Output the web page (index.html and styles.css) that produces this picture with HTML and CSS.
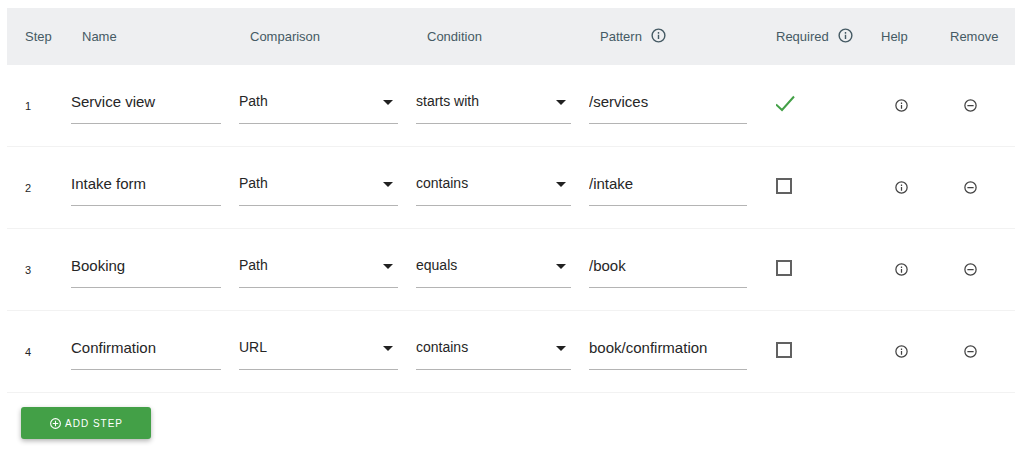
FILE: index.html
```html
<!DOCTYPE html>
<html lang="en">
<head>
    <meta charset="UTF-8">
    <meta name="viewport" content="width=device-width, initial-scale=1.0">
    <title>Goal Funnel Steps</title>
    <link rel="stylesheet" href="styles.css">
</head>
<body>
    <!-- Shared icons -->
    <svg class="sprite" aria-hidden="true">
        <symbol id="icon-info" viewBox="0 0 24 24">
            <path d="M11 7h2v2.4h-2zM11 11h2v6h-2zM12 2a10 10 0 1 0 0 20 10 10 0 0 0 0-20zm0 18a8 8 0 1 1 0-16 8 8 0 0 1 0 16z"/>
        </symbol>
        <symbol id="icon-remove" viewBox="0 0 24 24">
            <path d="M7 11h10v2H7zM12 2a10 10 0 1 0 0 20 10 10 0 0 0 0-20zm0 18a8 8 0 1 1 0-16 8 8 0 0 1 0 16z"/>
        </symbol>
        <symbol id="icon-add" viewBox="0 0 24 24">
            <path d="M11 7h2v4h4v2h-4v4h-2v-4H7v-2h4zM12 2a10 10 0 1 0 0 20 10 10 0 0 0 0-20zm0 18a8 8 0 1 1 0-16 8 8 0 0 1 0 16z"/>
        </symbol>
    </svg>

    <form id="stepsForm">
        <table class="steps">
            <colgroup>
                <col class="col-step">
                <col class="col-name">
                <col class="col-comparison">
                <col class="col-condition">
                <col class="col-pattern">
                <col class="col-required">
                <col class="col-help">
                <col class="col-remove">
            </colgroup>
            <thead>
                <tr>
                    <th scope="col">Step</th>
                    <th scope="col">Name</th>
                    <th scope="col">Comparison</th>
                    <th scope="col">Condition</th>
                    <th scope="col"><span class="head-label">Pattern <svg class="icon-head"><use href="#icon-info"/></svg></span></th>
                    <th scope="col"><span class="head-label">Required <svg class="icon-head"><use href="#icon-info"/></svg></span></th>
                    <th scope="col">Help</th>
                    <th scope="col">Remove</th>
                </tr>
            </thead>
            <tbody>
                <tr>
                    <td class="step-number">1</td>
                    <td><input type="text" class="field" aria-label="Name" value="Service view"></td>
                    <td><select class="field" aria-label="Comparison"><option selected>Path</option><option>URL</option></select></td>
                    <td><select class="field" aria-label="Condition"><option selected>starts with</option><option>contains</option><option>equals</option></select></td>
                    <td><input type="text" class="field" aria-label="Pattern" value="/services"></td>
                    <td class="required"><input type="checkbox" aria-label="Required" checked></td>
                    <td class="action"><button type="button" class="icon-button" aria-label="Help"><svg><use href="#icon-info"/></svg></button></td>
                    <td class="action"><button type="button" class="icon-button" aria-label="Remove"><svg><use href="#icon-remove"/></svg></button></td>
                </tr>
                <tr>
                    <td class="step-number">2</td>
                    <td><input type="text" class="field" aria-label="Name" value="Intake form"></td>
                    <td><select class="field" aria-label="Comparison"><option selected>Path</option><option>URL</option></select></td>
                    <td><select class="field" aria-label="Condition"><option>starts with</option><option selected>contains</option><option>equals</option></select></td>
                    <td><input type="text" class="field" aria-label="Pattern" value="/intake"></td>
                    <td class="required"><input type="checkbox" aria-label="Required"></td>
                    <td class="action"><button type="button" class="icon-button" aria-label="Help"><svg><use href="#icon-info"/></svg></button></td>
                    <td class="action"><button type="button" class="icon-button" aria-label="Remove"><svg><use href="#icon-remove"/></svg></button></td>
                </tr>
                <tr>
                    <td class="step-number">3</td>
                    <td><input type="text" class="field" aria-label="Name" value="Booking"></td>
                    <td><select class="field" aria-label="Comparison"><option selected>Path</option><option>URL</option></select></td>
                    <td><select class="field" aria-label="Condition"><option>starts with</option><option>contains</option><option selected>equals</option></select></td>
                    <td><input type="text" class="field" aria-label="Pattern" value="/book"></td>
                    <td class="required"><input type="checkbox" aria-label="Required"></td>
                    <td class="action"><button type="button" class="icon-button" aria-label="Help"><svg><use href="#icon-info"/></svg></button></td>
                    <td class="action"><button type="button" class="icon-button" aria-label="Remove"><svg><use href="#icon-remove"/></svg></button></td>
                </tr>
                <tr>
                    <td class="step-number">4</td>
                    <td><input type="text" class="field" aria-label="Name" value="Confirmation"></td>
                    <td><select class="field" aria-label="Comparison"><option>Path</option><option selected>URL</option></select></td>
                    <td><select class="field" aria-label="Condition"><option>starts with</option><option selected>contains</option><option>equals</option></select></td>
                    <td><input type="text" class="field" aria-label="Pattern" value="book/confirmation"></td>
                    <td class="required"><input type="checkbox" aria-label="Required"></td>
                    <td class="action"><button type="button" class="icon-button" aria-label="Help"><svg><use href="#icon-info"/></svg></button></td>
                    <td class="action"><button type="button" class="icon-button" aria-label="Remove"><svg><use href="#icon-remove"/></svg></button></td>
                </tr>
            </tbody>
        </table>

        <button type="button" class="add-step"><svg><use href="#icon-add"/></svg>ADD STEP</button>
    </form>
</body>
</html>
```
FILE: styles.css
```css
:root {
    --green: #43a047;
    --header-background: #eeeff1;
    --header-text: #455a64;
    --text: #262626;
    --icon: #424242;
    --line: #b4b4b4;
    --row-line: #f2f2f2;
}

* {
    box-sizing: border-box;
}

body {
    margin: 0;
    padding: 8px 9px 8px 7px;
    background-color: #fff;
    color: var(--text);
    font-family: "Liberation Sans", Arial, sans-serif;
    font-size: 15px;
}

.sprite {
    display: none;
}

svg {
    fill: currentColor;
}

/* Table */
.steps {
    width: 100%;
    table-layout: fixed;
    border-collapse: separate;
    border-spacing: 0;
}

.col-step { width: 55px; }
.col-name { width: 168px; }
.col-comparison { width: 177px; }
.col-condition { width: 173px; }
.col-pattern { width: 176px; }
.col-required { width: 105px; }
.col-help { width: 69px; }
.col-remove { width: 85px; }

.steps th {
    height: 57px;
    padding: 0 0 0 20px;
    background-color: var(--header-background);
    color: var(--header-text);
    font-size: 13px;
    font-weight: 400;
    text-align: left;
    white-space: nowrap;
}

.steps th:first-child {
    padding-left: 18px;
}

.head-label {
    display: flex;
    align-items: center;
    gap: 8px;
}

.icon-head {
    width: 17px;
    height: 17px;
    margin-bottom: 3px;
}

.steps td {
    height: 82px;
    padding: 0 9px 7px;
    border-bottom: 1px solid var(--row-line);
    vertical-align: middle;
}

.steps .step-number {
    padding: 0 0 0 18px;
    font-size: 11px;
}

/* Fields */
.field {
    display: block;
    width: 100%;
    height: 44px;
    margin: 0;
    padding: 0;
    border: 0;
    border-bottom: 1px solid var(--line);
    border-radius: 0;
    background-color: transparent;
    color: inherit;
    font-family: inherit;
    font-size: 15px;
    outline: none;
}

.field:focus {
    border-bottom-color: var(--green);
}

select.field {
    appearance: none;
    padding: 0 20px 2px 0;
    background-image: url("data:image/svg+xml,%3Csvg xmlns='http://www.w3.org/2000/svg' viewBox='0 0 10 5'%3E%3Cpath d='M0 0h10L5 5z' fill='%23212121'/%3E%3C/svg%3E");
    background-position: right 5px top 20px;
    background-size: 10px 5px;
    background-repeat: no-repeat;
    font-size: 14px;
    cursor: pointer;
}

/* Checkbox */
.steps .required {
    padding: 0 0 3px 20px;
}

.required input {
    appearance: none;
    display: block;
    width: 16px;
    height: 16px;
    margin: 0;
    border: 2px solid #616161;
    cursor: pointer;
}

.required input:checked {
    width: 20px;
    height: 20px;
    border: 0;
    background: url("data:image/svg+xml,%3Csvg xmlns='http://www.w3.org/2000/svg' viewBox='0 0 20 20'%3E%3Cpath d='M0 10.5l6 5.5L18 2.5' fill='none' stroke='%2343a047' stroke-width='2'/%3E%3C/svg%3E") no-repeat;
}

/* Row buttons */
.steps .action {
    padding: 0 0 0 33px;
}

.icon-button {
    display: block;
    width: 15px;
    height: 15px;
    padding: 0;
    border: 0;
    background: none;
    color: var(--icon);
    cursor: pointer;
}

.icon-button svg {
    display: block;
    width: 15px;
    height: 15px;
}

.add-step {
    display: flex;
    align-items: center;
    justify-content: center;
    gap: 3px;
    width: 130px;
    height: 32px;
    margin: 14px 0 0 14px;
    padding: 0;
    border: 0;
    border-radius: 3px;
    background-color: var(--green);
    box-shadow: 0 2px 5px rgba(0, 0, 0, 0.3);
    color: #fff;
    font-family: inherit;
    font-size: 10px;
    letter-spacing: 1px;
    cursor: pointer;
}

.add-step svg {
    width: 13px;
    height: 13px;
}
```
